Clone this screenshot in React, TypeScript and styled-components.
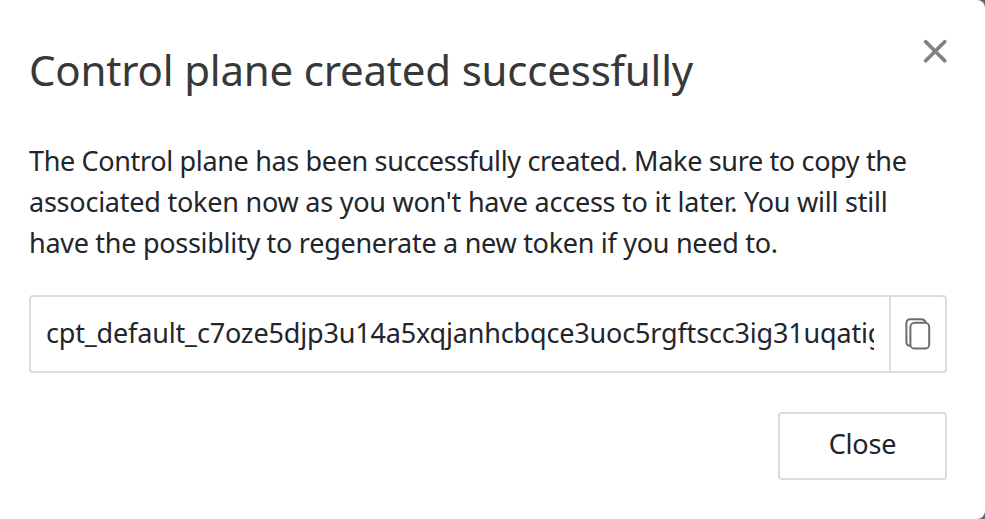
import React from "react";
import styled, { createGlobalStyle } from "styled-components";

const GlobalStyle = createGlobalStyle`
  * { box-sizing: border-box; }
  body {
    margin: 0;
    background: #666;
    font-family: "Noto Sans", "Open Sans", sans-serif;
    color: #22252a;
  }
`;

const Dialog = styled.section`
  display: flex;
  flex-direction: column;
  width: 985px;
  height: 519px;
  padding: 35px 38px 39px 29px;
  background: #fff;
  border-radius: 0 8px 8px 0;
`;

const Header = styled.header`
  display: flex;
  justify-content: space-between;
  align-items: flex-start;
  height: 105px;
`;

const Title = styled.h1`
  margin: 0;
  font-size: 42px;
  font-weight: 400;
  line-height: 70px;
  letter-spacing: -0.2px;
  white-space: nowrap;
  color: #363839;
`;

const IconButton = styled.button`
  display: flex;
  margin: 4px 0 0;
  padding: 0;
  border: 0;
  background: none;
`;

const Message = styled.p`
  margin: 0;
  height: 155px;
  font-size: 27px;
  line-height: 41px;
`;

const Line = styled.span<{ $spacing: number }>`
  display: block;
  width: max-content;
  white-space: nowrap;
  letter-spacing: ${({ $spacing }) => $spacing}px;
`;

const TokenField = styled.div`
  display: flex;
  flex: none;
  height: 78px;
  border: 2px solid #dcdcdc;
  border-radius: 4px;
`;

const TokenValue = styled.div`
  flex: 1;
  min-width: 0;
  margin: 0 15px 0 15px;
  overflow: hidden;
  font-size: 27px;
  line-height: 71px;
`;

const CopyButton = styled.button`
  display: flex;
  align-items: center;
  justify-content: center;
  width: 56px;
  padding: 0;
  border: 0;
  border-left: 2px solid #dcdcdc;
  background: none;
`;

const Footer = styled.footer`
  display: flex;
  justify-content: flex-end;
  margin-top: 39px;
`;

const CloseButton = styled.button`
  width: 169px;
  height: 68px;
  padding: 0 0 5px;
  border: 2px solid #dcdcdc;
  border-radius: 4px;
  background: #fff;
  color: #22232a;
  font: 400 27px "Noto Sans", sans-serif;
  letter-spacing: -0.2px;
`;

export default function App() {
  return (
    <>
      <GlobalStyle />
      <Dialog role="dialog" aria-labelledby="title">
        <Header>
          <Title id="title">Control plane created successfully</Title>
          <IconButton aria-label="Dismiss">
            <svg width="24" height="24" viewBox="0 0 24 24" fill="none" stroke="#808080" strokeWidth="3.7" strokeLinecap="round">
              <path d="M2.7 2.7 21.7 21.7M21.7 2.7 2.7 21.7" />
            </svg>
          </IconButton>
        </Header>
        <Message>
          <Line $spacing={-0.345}>The Control plane has been successfully created. Make sure to copy the</Line>
          <Line $spacing={-0.235}>associated token now as you won't have access to it later. You will still</Line>
          <Line $spacing={-0.285}>have the possiblity to regenerate a new token if you need to.</Line>
        </Message>
        <TokenField>
          <TokenValue>
            <Line $spacing={-0.17}>cpt_default_c7oze5djp3u14a5xqjanhcbqce3uoc5rgftscc3ig31uqatig</Line>
          </TokenValue>
          <CopyButton aria-label="Copy token">
            <svg width="26" height="32" viewBox="0 0 26 32" fill="none" stroke="#6a6d76" strokeWidth="2">
              <path d="M5.3 28C3 27.8 1.4 26.5 1.4 24V5C1.4 2.5 3 1.2 5.3 1.2H16C18.5 1.2 20.2 2.4 20.8 4.7" />
              <rect x="5.4" y="4.8" width="18.8" height="25.8" rx="4.2" />
            </svg>
          </CopyButton>
        </TokenField>
        <Footer>
          <CloseButton>Close</CloseButton>
        </Footer>
      </Dialog>
    </>
  );
}
